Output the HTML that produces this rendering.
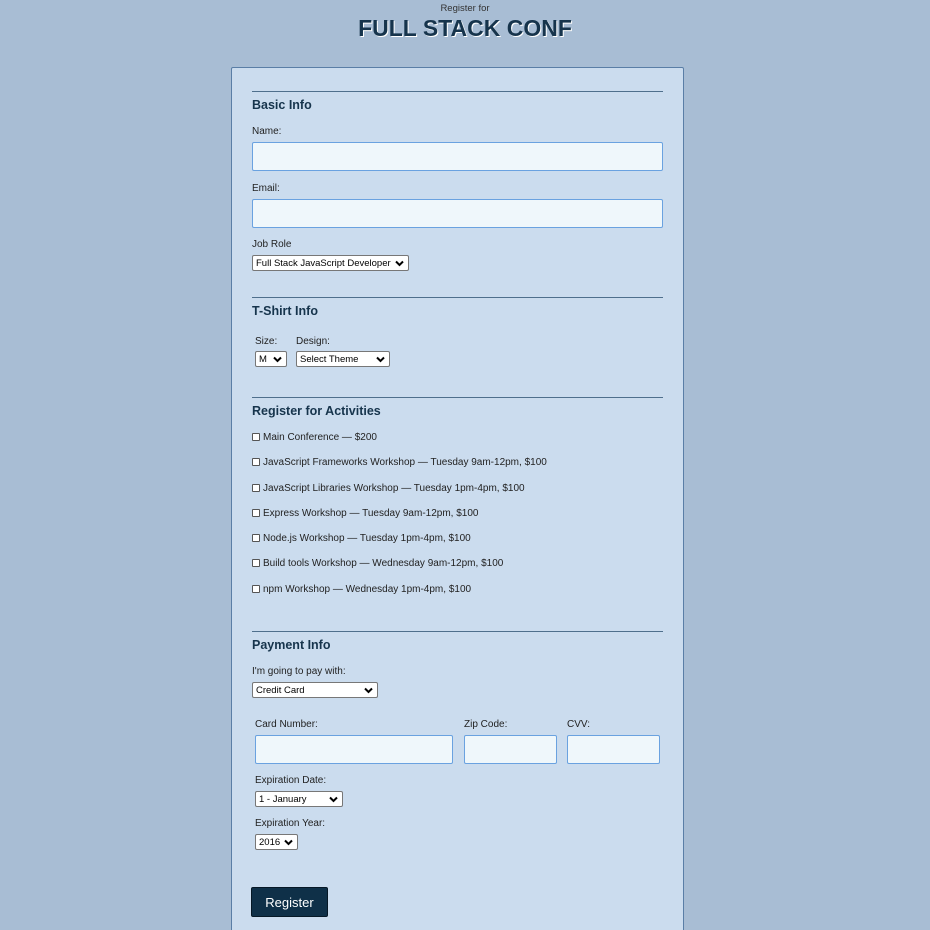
<!DOCTYPE html>
<html><head><meta charset="utf-8"><style>
html,body{margin:0;width:930px;height:930px;overflow:hidden}
body{background:#a8bdd4;font-family:"Liberation Sans",sans-serif;position:relative;color:#222}
.a{position:absolute}
.card{left:231px;top:67px;width:451px;height:880px;background:#cbdcee;border:1px solid #5a7ea6;border-radius:2px}
.hr{left:252px;width:411px;height:1px;background:#4f6f8c}
h2{position:absolute;margin:0;font-size:12.5px;font-weight:bold;color:#16344c;left:252px}
.l{font-size:10px;color:#222;white-space:nowrap}
.in{background:#eff7fb;border:1px solid #6aa2e0;border-radius:2px;box-sizing:border-box}
.sel{background:#fff;border:1px solid #777;border-radius:2px;box-sizing:border-box;font-size:9.5px;color:#000;padding:1px 3px;line-height:13px;white-space:nowrap}
.sel svg{position:absolute;right:4px;top:4px}
.cb{width:6px;height:6px;border:1px solid #555;background:#fff;border-radius:1px}
</style></head><body>
<div class="a l" style="left:0;width:930px;text-align:center;top:3px;font-size:9.5px;color:#333">Register for</div>
<div class="a" style="left:0;width:930px;text-align:center;top:15px;font-size:23px;font-weight:bold;color:#16344c;text-shadow:1px 1px 0 #fff">FULL STACK CONF</div>
<div class="a card"></div>

<div class="a hr" style="top:91px"></div>
<h2 style="top:98px">Basic Info</h2>
<div class="a l" style="left:252px;top:126px">Name:</div>
<div class="a in" style="left:252px;top:142px;width:411px;height:29px"></div>
<div class="a l" style="left:252px;top:183px">Email:</div>
<div class="a in" style="left:252px;top:199px;width:411px;height:29px"></div>
<div class="a l" style="left:252px;top:239px">Job Role</div>
<div class="a sel" style="left:252px;top:255px;width:157px;height:16px">Full Stack JavaScript Developer<svg width="9" height="7" viewBox="0 0 9 7"><path d="M1 1.5L4.5 5 8 1.5" stroke="#000" stroke-width="2" fill="none"/></svg></div>

<div class="a hr" style="top:297px"></div>
<h2 style="top:304px">T-Shirt Info</h2>
<div class="a l" style="left:255px;top:336px">Size:</div>
<div class="a l" style="left:296px;top:336px">Design:</div>
<div class="a sel" style="left:255px;top:351px;width:32px;height:16px">M<svg width="9" height="7" viewBox="0 0 9 7"><path d="M1 1.5L4.5 5 8 1.5" stroke="#000" stroke-width="2" fill="none"/></svg></div>
<div class="a sel" style="left:296px;top:351px;width:94px;height:16px">Select Theme<svg width="9" height="7" viewBox="0 0 9 7"><path d="M1 1.5L4.5 5 8 1.5" stroke="#000" stroke-width="2" fill="none"/></svg></div>

<div class="a hr" style="top:397px"></div>
<h2 style="top:404px">Register for Activities</h2>
<div class="a cb" style="left:252px;top:433px"></div><div class="a l" style="left:263px;top:432px">Main Conference — $200</div>
<div class="a cb" style="left:252px;top:458px"></div><div class="a l" style="left:263px;top:457px">JavaScript Frameworks Workshop — Tuesday 9am-12pm, $100</div>
<div class="a cb" style="left:252px;top:484px"></div><div class="a l" style="left:263px;top:483px">JavaScript Libraries Workshop — Tuesday 1pm-4pm, $100</div>
<div class="a cb" style="left:252px;top:509px"></div><div class="a l" style="left:263px;top:508px">Express Workshop — Tuesday 9am-12pm, $100</div>
<div class="a cb" style="left:252px;top:534px"></div><div class="a l" style="left:263px;top:533px">Node.js Workshop — Tuesday 1pm-4pm, $100</div>
<div class="a cb" style="left:252px;top:559px"></div><div class="a l" style="left:263px;top:558px">Build tools Workshop — Wednesday 9am-12pm, $100</div>
<div class="a cb" style="left:252px;top:585px"></div><div class="a l" style="left:263px;top:584px">npm Workshop — Wednesday 1pm-4pm, $100</div>

<div class="a hr" style="top:631px"></div>
<h2 style="top:638px">Payment Info</h2>
<div class="a l" style="left:252px;top:666px">I'm going to pay with:</div>
<div class="a sel" style="left:252px;top:682px;width:126px;height:16px">Credit Card<svg width="9" height="7" viewBox="0 0 9 7"><path d="M1 1.5L4.5 5 8 1.5" stroke="#000" stroke-width="2" fill="none"/></svg></div>
<div class="a l" style="left:255px;top:719px">Card Number:</div>
<div class="a l" style="left:464px;top:719px">Zip Code:</div>
<div class="a l" style="left:567px;top:719px">CVV:</div>
<div class="a in" style="left:255px;top:735px;width:198px;height:29px"></div>
<div class="a in" style="left:464px;top:735px;width:93px;height:29px"></div>
<div class="a in" style="left:567px;top:735px;width:93px;height:29px"></div>
<div class="a l" style="left:255px;top:775px">Expiration Date:</div>
<div class="a sel" style="left:255px;top:791px;width:88px;height:16px">1 - January<svg width="9" height="7" viewBox="0 0 9 7"><path d="M1 1.5L4.5 5 8 1.5" stroke="#000" stroke-width="2" fill="none"/></svg></div>
<div class="a l" style="left:255px;top:818px">Expiration Year:</div>
<div class="a sel" style="left:255px;top:834px;width:43px;height:16px">2016<svg width="9" height="7" viewBox="0 0 9 7"><path d="M1 1.5L4.5 5 8 1.5" stroke="#000" stroke-width="2" fill="none"/></svg></div>
<div class="a" style="left:251px;top:887px;width:77px;height:30px;background:#0f3048;border:1px solid #061826;border-radius:2px;box-sizing:border-box;color:#fff;font-size:13px;text-align:center;line-height:30px">Register</div>
</body></html>
